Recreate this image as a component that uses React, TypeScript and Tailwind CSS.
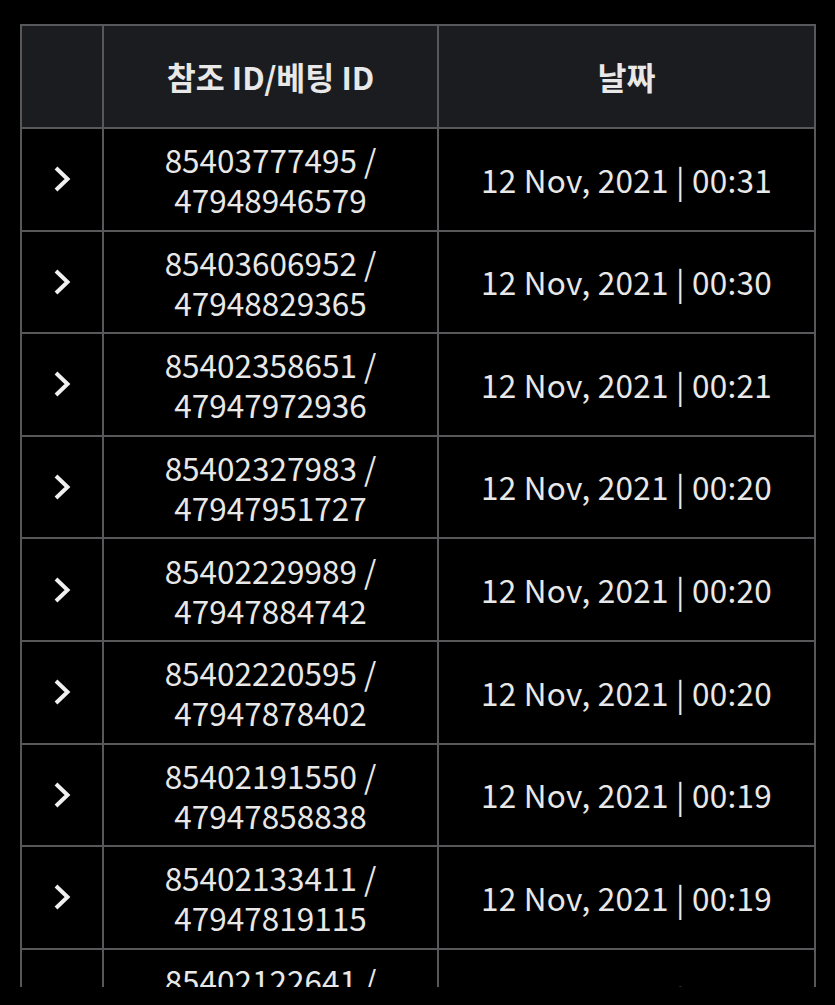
import React from 'react';

interface BetRow {
  refId: string;
  betId: string;
  date: string;
}

const rows: BetRow[] = [
  { refId: '85403777495', betId: '47948946579', date: '12 Nov, 2021 | 00:31' },
  { refId: '85403606952', betId: '47948829365', date: '12 Nov, 2021 | 00:30' },
  { refId: '85402358651', betId: '47947972936', date: '12 Nov, 2021 | 00:21' },
  { refId: '85402327983', betId: '47947951727', date: '12 Nov, 2021 | 00:20' },
  { refId: '85402229989', betId: '47947884742', date: '12 Nov, 2021 | 00:20' },
  { refId: '85402220595', betId: '47947878402', date: '12 Nov, 2021 | 00:20' },
  { refId: '85402191550', betId: '47947858838', date: '12 Nov, 2021 | 00:19' },
  { refId: '85402133411', betId: '47947819115', date: '12 Nov, 2021 | 00:19' },
  { refId: '85402122641', betId: '47947811204', date: '12 Nov, 2021 | 00:19' },
];

const Chevron = () => (
  <svg width="18" height="28" viewBox="0 0 18 28" className="mx-auto block">
    <polyline points="3,3 14.5,14 3,25" fill="none" stroke="#f0f0f0" strokeWidth="4" />
  </svg>
);

const App: React.FC = () => {
  return (
    <div
      className="bg-black min-h-screen"
      style={{ fontFamily: '"Noto Sans CJK KR", "Noto Sans", sans-serif' }}
    >
      <div className="h-[987px] overflow-hidden pt-[24px] pl-[20px] pr-[19px]">
        <table className="w-[796px] table-fixed border-collapse text-[#e8e8e8]">
          <colgroup>
            <col className="w-[82px]" />
            <col className="w-[335px]" />
            <col />
          </colgroup>
          <thead>
            <tr className="h-[103px] bg-[#1b1c20]">
              <th className="border-2 border-[#58585a]"></th>
              <th className="border-2 border-[#58585a] text-[31.5px] font-bold">참조 ID/베팅 ID</th>
              <th className="border-2 border-[#58585a] text-[31.5px] font-bold">날짜</th>
            </tr>
          </thead>
          <tbody>
            {rows.map((row) => (
              <tr key={row.refId} className="h-[102.6px]">
                <td className="border-2 border-[#58585a] align-middle">
                  <Chevron />
                </td>
                <td className="border-2 border-[#58585a] text-center text-[31.5px] font-normal leading-[40px]">
                  {row.refId} /
                  <br />
                  {row.betId}
                </td>
                <td className="border-2 border-[#58585a] text-center text-[31.5px] font-normal tracking-[0.25px]">
                  {row.date}
                </td>
              </tr>
            ))}
          </tbody>
        </table>
      </div>
    </div>
  );
};

export default App;
